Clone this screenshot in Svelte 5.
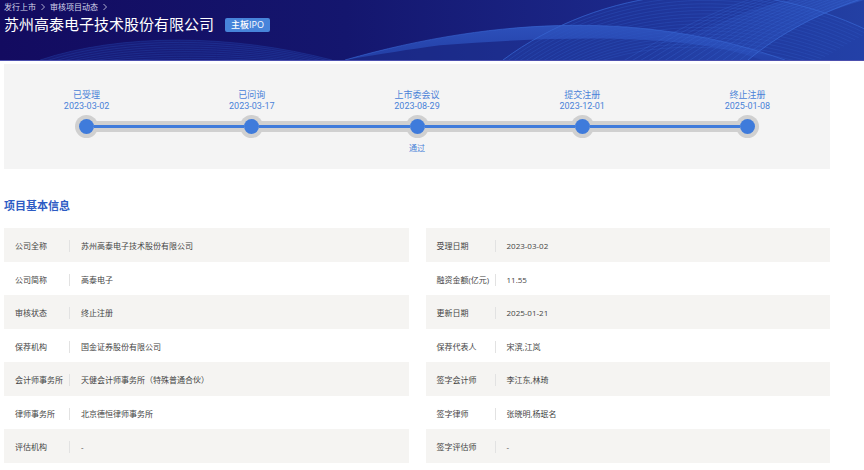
<script>
  const steps = [
    { name: '已受理', date: '2023-03-02' },
    { name: '已问询', date: '2023-03-17' },
    { name: '上市委会议', date: '2023-08-29', result: '通过' },
    { name: '提交注册', date: '2023-12-01' },
    { name: '终止注册', date: '2025-01-08' },
  ];

  const company = [
    ['公司全称', '苏州高泰电子技术股份有限公司'],
    ['公司简称', '高泰电子'],
    ['审核状态', '终止注册'],
    ['保荐机构', '国金证券股份有限公司'],
    ['会计师事务所', '天健会计师事务所（特殊普通合伙）'],
    ['律师事务所', '北京德恒律师事务所'],
    ['评估机构', '-'],
  ];

  const project = [
    ['受理日期', '2023-03-02'],
    ['融资金额(亿元)', '11.55'],
    ['更新日期', '2025-01-21'],
    ['保荐代表人', '宋滨,江岚'],
    ['签字会计师', '李江东,林琦'],
    ['签字律师', '张晓明,杨珉名'],
    ['签字评估师', '-'],
  ];

  // Cubic curves spread evenly between two outer ones, 8 numbers each
  function curves(from, to, count) {
    return Array.from({ length: count }, (_, i) => {
      const t = i / (count - 1);
      const p = from.map((v, k) => (v + (to[k] - v) * t).toFixed(1));
      return `M${p[0]} ${p[1]}C${p[2]} ${p[3]} ${p[4]} ${p[5]} ${p[6]} ${p[7]}`;
    });
  }

  const waves = [
    { color: '#2748b0', opacity: 0.45, lines: curves([40, 61, 120, 34, 230, 34, 332, 61], [100, 64, 150, 58, 230, 58, 290, 64], 9) },
    { color: '#3058c4', opacity: 0.45, lines: curves([503, 61, 600, -12, 740, -32, 870, 32], [590, 66, 650, 42, 730, 42, 810, 66], 17) },
    { color: '#3a68d4', opacity: 0.4, lines: curves([620, 64, 670, 34, 710, 12, 760, -4], [748, 61, 780, 34, 820, 12, 870, -4], 16) },
  ];
</script>

<header class="banner">
  <svg class="waves" viewBox="0 0 864 61" preserveAspectRatio="none" aria-hidden="true">
    <defs>
      <linearGradient id="sky" x1="0" y1="0" x2="1" y2="0">
        <stop offset="0" stop-color="#130b60" />
        <stop offset="0.4" stop-color="#14166e" />
        <stop offset="0.7" stop-color="#1b2788" />
        <stop offset="1" stop-color="#2340a4" />
      </linearGradient>
      <linearGradient id="band" x1="0" y1="0" x2="0" y2="1">
        <stop offset="0" stop-color="#3159c6" />
        <stop offset="1" stop-color="#2443ac" />
      </linearGradient>
      <linearGradient id="sweep" x1="0" y1="0" x2="1" y2="0">
        <stop offset="0" stop-color="#2f5ac8" stop-opacity="0" />
        <stop offset="1" stop-color="#3462d0" stop-opacity="0.75" />
      </linearGradient>
    </defs>
    <rect width="864" height="61" fill="url(#sky)" />
    <path d="M40 61C120 34 230 34 332 61Z" fill="#1d3398" opacity="0.4" />
    <path d="M503 61C600-12 740-32 870 32V61Z" fill="#2343ac" opacity="0.4" />
    <path d="M345 61C500 16 650 12 785 61H400C500 40 520 44 580 61Z" fill="#2340a6" opacity="0.4" />
    <path d="M345 61C500 16 650 12 785 61H762C690 34 570 36 440 46C410 50 380 55 345 61Z" fill="url(#band)" opacity="0.8" />
    <path d="M640 61C700 30 750 8 790 0H864C820 12 780 34 748 61Z" fill="url(#sweep)" opacity="0.7" />
    {#each waves as wave}
      <g fill="none" stroke={wave.color} opacity={wave.opacity} stroke-width="0.8">
        {#each wave.lines as d}
          <path {d} />
        {/each}
      </g>
    {/each}
    <g fill="none" stroke="#3a68d4" stroke-width="1" opacity="0.6">
      <path d="M345 61C500 16 650 12 785 61" />
      <path d="M503 61C600-12 740-32 870 32" />
      <path d="M748 61C780 34 820 12 870-4" />
    </g>
  </svg>
  <nav class="crumbs" aria-label="breadcrumb">
    <a href="#listing">发行上市</a>
    <svg class="arrow" viewBox="0 0 6 8"><path d="M1.5 1L4.5 4L1.5 7" /></svg>
    <a href="#projects">审核项目动态</a>
    <svg class="arrow" viewBox="0 0 6 8"><path d="M1.5 1L4.5 4L1.5 7" /></svg>
  </nav>
  <div class="title">
    <h1>苏州高泰电子技术股份有限公司</h1>
    <span class="badge">主板IPO</span>
  </div>
</header>

<main>
  <ol class="steps">
    {#each steps as step}
      <li>
        <span>{step.name}</span>
        <time>{step.date}</time>
        <div class="node">
          <i class="rail"></i>
          <i class="dot"></i>
          <i class="rail"></i>
        </div>
        {#if step.result}
          <span class="result">{step.result}</span>
        {/if}
      </li>
    {/each}
  </ol>

  <h2>项目基本信息</h2>

  <div class="info">
    {#each [company, project] as rows, i}
      <table class:wide={i === 1}>
        <tbody>
          {#each rows as [label, value]}
            <tr>
              <th scope="row"><div>{label}</div></th>
              <td>{value}</td>
            </tr>
          {/each}
        </tbody>
      </table>
    {/each}
  </div>
</main>

<style>
  :global(body) {
    margin: 0;
    background: #fff;
    color: #444;
    font-family: 'Open Sans', 'Noto Sans CJK SC', sans-serif;
    font-size: 8px;
    line-height: 12px;
  }

  .banner {
    position: relative;
    box-sizing: border-box;
    height: 61px;
    padding: 0 4px;
    border-bottom: 1px solid #4c4fae;
    background: #130b60;
    color: #fff;
  }

  .waves {
    position: absolute;
    inset: 0;
    width: 100%;
    height: 100%;
  }

  .crumbs {
    position: relative;
    display: flex;
    align-items: center;
    gap: 4px;
    height: 13px;
  }

  .crumbs a {
    color: #d5d5ea;
    text-decoration: none;
  }

  .arrow {
    width: 6px;
    height: 8px;
    fill: none;
    stroke: #d5d5ea;
    stroke-width: 0.8;
  }

  .title {
    position: relative;
    display: flex;
    align-items: center;
    gap: 11px;
    height: 23px;
  }

  h1 {
    margin: 0;
    font-size: 15px;
    font-weight: 400;
    line-height: 23px;
  }

  .badge {
    padding: 0 6px;
    border-radius: 2px;
    background: #4784da;
    font-size: 9px;
    font-weight: 500;
    line-height: 14px;
  }

  main {
    padding: 3px 34px 6px 4px;
  }

  .steps {
    display: grid;
    grid-template-columns: repeat(5, 1fr);
    box-sizing: border-box;
    min-height: 105px;
    margin: 0;
    padding: 26px 0 13px;
    background: #f4f4f4;
    color: #4a82d8;
    font-family: Roboto, 'Noto Sans CJK SC', sans-serif;
    font-size: 9px;
    line-height: 11px;
    list-style: none;
  }

  .steps li {
    display: flex;
    flex-direction: column;
    align-items: center;
  }

  .node {
    display: flex;
    align-items: center;
    align-self: stretch;
    margin: 7px 0 8px;
  }

  .dot {
    width: 15px;
    height: 15px;
    border-radius: 50%;
    background: #3f7bdb;
    box-shadow: 0 0 0 4px #d0d0d0;
  }

  /* drawn above the ring so the blue line reaches the dot */
  .rail {
    position: relative;
    flex: 1;
    height: 11px;
    background: linear-gradient(#d0d0d0 4px, #3f7bdb 4px 7px, #d0d0d0 7px);
  }

  li:first-child .rail:first-child,
  li:last-child .rail:last-child {
    background: none;
  }

  .result {
    font-size: 8px;
    line-height: 14px;
  }

  h2 {
    margin: 28px 0 14px;
    color: #2d5bc4;
    font-size: 11px;
    font-weight: 700;
    line-height: 17px;
  }

  .info {
    display: grid;
    grid-template-columns: 1fr 1fr;
    gap: 17px;
  }

  table {
    width: 100%;
    border-collapse: collapse;
    table-layout: fixed;
  }

  tr {
    height: 33px;
  }

  tr:nth-child(odd) {
    height: 34px;
    background: #f5f4f2;
  }

  th {
    width: 66px;
    padding: 2px 0 0;
    font-weight: 400;
    text-align: left;
    white-space: nowrap;
  }

  .wide th {
    width: 70px;
  }

  th div {
    padding-left: 11px;
    border-right: 1px solid #e2e2e2;
  }

  td {
    padding: 2px 11px 0;
  }
</style>
